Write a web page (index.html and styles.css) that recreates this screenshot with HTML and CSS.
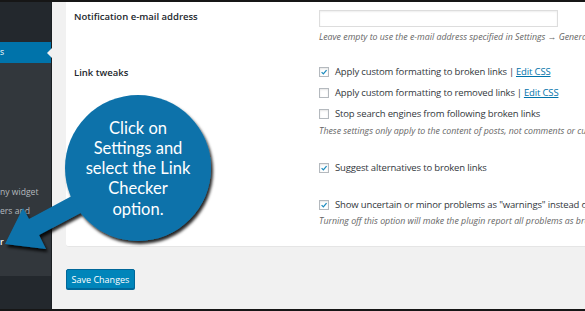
FILE: index.html
```html
<!DOCTYPE html>
<html>
<head>
<meta charset="utf-8">
<link rel="stylesheet" href="styles.css">
</head>
<body>
<div class="sidebar">
  <div class="sb-top"></div>
  <div class="sb-current">s</div>
  <div class="sb-sub">
    <div class="sb-item">ny widget</div>
    <div class="sb-item">ers and</div>
    <div class="sb-item sb-active">r</div>
  </div>
  <div class="sb-bottom"></div>
</div>
<div class="main">
  <div class="card">
    <div class="form-row">
      <div class="label">Notification e-mail address</div>
      <div class="field">
        <input class="text-input" type="text">
        <div class="desc">Leave empty to use the e-mail address specified in Settings → General</div>
      </div>
    </div>
    <div class="form-row row-tweaks">
      <div class="label label-tweaks">Link tweaks</div>
      <div class="field">
        <div class="check-line"><span class="cb checked"><svg viewBox="0 0 10 10"><path d="M2 5.2 L4.2 7.4 L8.2 2.6" fill="none" stroke="#1e8cbe" stroke-width="1.6"/></svg></span>Apply custom formatting to broken links <span class="sep">|</span> <a class="link" href="#">Edit CSS</a></div>
        <div class="check-line"><span class="cb"></span>Apply custom formatting to removed links <span class="sep">|</span> <a class="link" href="#">Edit CSS</a></div>
        <div class="check-line"><span class="cb"></span>Stop search engines from following broken links</div>
        <div class="desc desc-tight">These settings only apply to the content of posts, not comments or custom fields.</div>
      </div>
    </div>
    <div class="form-row row-suggest">
      <div class="label"></div>
      <div class="field">
        <div class="check-line"><span class="cb checked"><svg viewBox="0 0 10 10"><path d="M2 5.2 L4.2 7.4 L8.2 2.6" fill="none" stroke="#1e8cbe" stroke-width="1.6"/></svg></span>Suggest alternatives to broken links</div>
      </div>
    </div>
    <div class="form-row row-warn">
      <div class="label"></div>
      <div class="field">
        <div class="check-line"><span class="cb checked"><svg viewBox="0 0 10 10"><path d="M2 5.2 L4.2 7.4 L8.2 2.6" fill="none" stroke="#1e8cbe" stroke-width="1.6"/></svg></span>Show uncertain or minor problems as "warnings" instead of "broken"</div>
        <div class="desc desc-warn">Turning off this option will make the plugin report all problems as broken links.</div>
      </div>
    </div>
  </div>
  <button class="btn-primary">Save Changes</button>
</div>
<div class="callout">
  <svg class="callout-shape" width="585" height="311" viewBox="0 0 585 311">
    <defs>
      <filter id="sh" x="-20%" y="-20%" width="140%" height="140%">
        <feDropShadow dx="2" dy="3" stdDeviation="1.6" flood-color="#000" flood-opacity="0.85"/>
      </filter>
    </defs>
    <g filter="url(#sh)" fill="#0b72aa">
      <polygon points="5,244 23,208 29,219 96,183 105,200 39,235 46,249"/>
      <circle cx="138" cy="168" r="73"/>
    </g>
  </svg>
  <div class="callout-text">Click on<br>Settings and<br>select the Link<br>Checker<br>option.</div>
</div>
</body>
</html>
```
FILE: styles.css
```css
* { box-sizing: border-box; }
html, body { margin: 0; padding: 0; }
body {
  width: 585px;
  height: 311px;
  overflow: hidden;
  display: flex;
  background: #f1f1f1;
  border-top: 2px solid #161616;
  border-bottom: 2px solid #161616;
  font-family: "Open Sans", "Noto Sans", sans-serif;
  color: #23282d;
  position: relative;
}
.sidebar {
  width: 52px;
  flex: none;
  display: flex;
  flex-direction: column;
  font-size: 8.6px;
  border-right: 1px solid #1b1f22;
}
.sb-top { height: 40px; background: #23282d; }
.sb-current {
  height: 21px;
  background: #0073aa;
  color: #fff;
  line-height: 21px;
  position: relative;
}
.sb-current::after {
  content: "";
  position: absolute;
  right: -1px;
  top: 5.5px;
  border-style: solid;
  border-width: 5px 5px 5px 0;
  border-color: transparent #f1f1f1 transparent transparent;
}
.sb-sub {
  height: 213px;
  background: #32373c;
  padding-top: 120px;
  color: #b4b9be;
  white-space: nowrap;
  overflow: hidden;
}
.sb-item { line-height: 19px; height: 19px; }
.sb-active { color: #fff; font-weight: 600; margin-top: 12px; }
.sb-bottom { flex: 1; background: #23282d; }

.main {
  flex: 1;
  padding-left: 14px;
  min-width: 0;
}
.card {
  background: #fff;
  width: 540px;
  padding: 8px 0 19px 8px;
  border-bottom: 1px solid #e5e5e5;
  border-radius: 0 0 0 3px;
}
.form-row {
  display: grid;
  grid-template-columns: 245px 1fr;
}
.label {
  font-size: 9.5px;
  font-weight: 600;
  line-height: 12px;
  margin-top: 1px;
  white-space: nowrap;
}
.field { font-size: 9.5px; letter-spacing: -0.15px; white-space: nowrap; }
.text-input {
  display: block;
  width: 239px;
  height: 17px;
  border: 1px solid #ddd;
  box-shadow: inset 0 1px 2px rgba(0,0,0,.07);
  margin: 0;
  padding: 0;
  background: #fff;
}
.desc {
  font-style: italic;
  font-size: 8.8px;
  letter-spacing: 0;
  line-height: 12px;
  color: #666;
  margin-top: 4px;
}
.desc-tight { margin-top: 1px; }
.desc-warn { margin-top: 0; }
.row-tweaks { margin-top: 18px; }
.label-tweaks { margin-top: 6px; }
.row-suggest { margin-top: 20px; }
.row-warn { margin-top: 16px; }
.check-line {
  height: 21px;
  display: flex;
  align-items: center;
  color: #32373c;
}
.cb {
  width: 10px;
  height: 10px;
  flex: none;
  border: 1px solid #b4b9be;
  box-shadow: inset 0 1px 2px rgba(0,0,0,.1);
  background: #fff;
  margin-right: 6px;
  display: flex;
}
.cb svg { width: 100%; height: 100%; }
.sep { margin: 0 2px; color: #32373c; }
.link { color: #0073aa; text-decoration: underline; }

.btn-primary {
  display: block;
  margin-top: 22px;
  height: 20px;
  width: 69px;
  padding: 0;
  background: #0085ba;
  border: 1px solid #006799;
  border-radius: 2px;
  box-shadow: 0 1px 0 #006799;
  color: #fff;
  font-family: "Open Sans", "Noto Sans", sans-serif;
  font-size: 9px;
}

.callout {
  position: absolute;
  left: 0;
  top: -2px;
  width: 585px;
  height: 311px;
  pointer-events: none;
}
.callout-shape { position: absolute; left: 0; top: 0; }
.callout-text {
  position: absolute;
  left: 63px;
  top: 117.5px;
  width: 150px;
  text-align: center;
  color: #fff;
  font-family: "Lato", "Open Sans", sans-serif;
  font-size: 16.5px;
  line-height: 20.3px;
}
```
